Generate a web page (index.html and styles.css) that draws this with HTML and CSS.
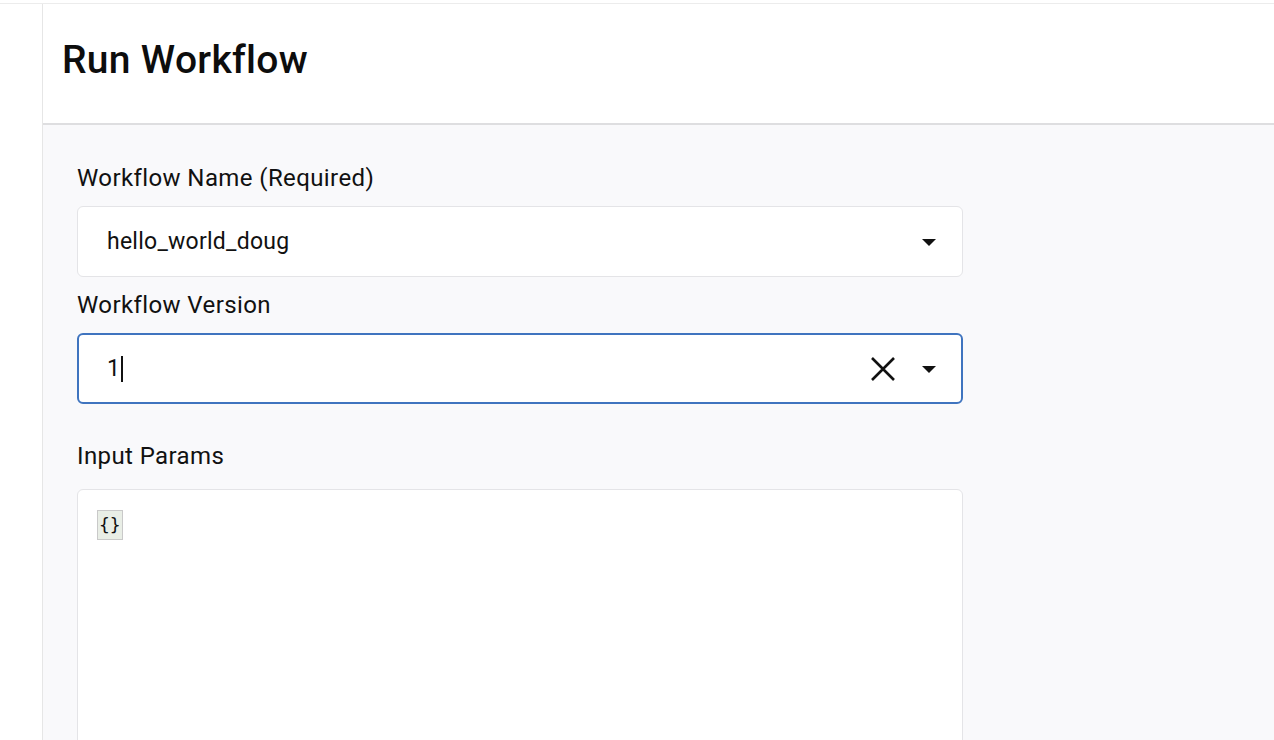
FILE: index.html
```html
<!DOCTYPE html>
<html>
<head>
<meta charset="utf-8">
<link rel="stylesheet" href="styles.css">
</head>
<body>
<div class="topline"></div>
<div class="app">
  <aside class="sidebar"></aside>
  <main class="main">
    <header class="header">
      <h1 class="title">Run Workflow</h1>
    </header>
    <section class="content">
      <div class="form">
        <label class="label">Workflow Name (Required)</label>
        <div class="select">
          <span class="value">hello_world_doug</span>
          <span class="icons">
            <svg class="caret" width="14" height="8" viewBox="0 0 14 8"><path d="M0 0 H14 L7 7 Z" fill="#111"/></svg>
          </span>
        </div>
        <label class="label">Workflow Version</label>
        <div class="select focused">
          <span class="value">1<span class="cursor"></span></span>
          <span class="icons">
            <svg class="clear" width="26" height="26" viewBox="0 0 26 26"><path d="M2 2 L24 24 M24 2 L2 24" stroke="#111" stroke-width="2.6" fill="none"/></svg>
            <svg class="caret" width="14" height="8" viewBox="0 0 14 8"><path d="M0 0 H14 L7 7 Z" fill="#111"/></svg>
          </span>
        </div>
        <label class="label label-params">Input Params</label>
        <div class="editor">
          <span class="code">{}</span>
        </div>
      </div>
    </section>
  </main>
</div>
</body>
</html>
```

FILE: styles.css
```css
* { box-sizing: border-box; }
html, body { margin: 0; padding: 0; height: 100%; overflow: hidden; }
body {
  font-family: Roboto, "Liberation Sans", Arial, sans-serif;
  color: #111;
  background: #fff;
}
.topline {
  height: 4px;
  border-bottom: 1px solid #ececec;
  background: #fff;
}
.app {
  display: flex;
  height: 736px;
}
.sidebar {
  width: 43px;
  flex: none;
  border-right: 1px solid #e6e6e6;
  background: #fff;
}
.main {
  flex: 1;
  display: flex;
  flex-direction: column;
  min-width: 0;
}
.header {
  height: 121px;
  flex: none;
  border-bottom: 2px solid #dedee0;
  background: #fff;
  padding: 34px 0 0 19px;
}
.title {
  margin: 0;
  font-size: 39px;
  font-weight: 500;
  line-height: 44px;
  color: #0d0d0d;
  letter-spacing: 0.3px;
}
.content {
  flex: 1;
  background: #f9f9fb;
  padding: 37px 0 0 34px;
  overflow: hidden;
}
.form {
  width: 886px;
  display: flex;
  flex-direction: column;
}
.label {
  display: block;
  font-size: 24px;
  line-height: 32px;
  letter-spacing: 0.4px;
  color: #111;
  margin-bottom: 12px;
}
.select {
  height: 71px;
  background: #fff;
  border: 1px solid #e4e4e7;
  border-radius: 6px;
  display: flex;
  align-items: center;
  justify-content: space-between;
  padding: 0 26px 0 29px;
  margin-bottom: 12px;
}
.select.focused {
  border: 2px solid #3f74bf;
  padding: 0 25px 0 28px;
  margin-bottom: 36px;
}
.value {
  font-size: 23px;
  line-height: 30px;
  letter-spacing: 0.25px;
  color: #111;
  display: flex;
  align-items: center;
}
.cursor {
  display: inline-block;
  width: 2px;
  height: 26px;
  background: #111;
  margin-left: 1px;
}
.icons {
  display: flex;
  align-items: center;
  gap: 26px;
}
.clear { display: block; }
.caret { display: block; margin-top: 2px; }
.label-params { margin-bottom: 17px; }
.editor {
  height: 300px;
  background: #fff;
  border: 1px solid #e4e4e7;
  border-radius: 6px;
  padding: 20px 19px;
}
.code {
  display: inline-block;
  font-family: "DejaVu Sans Mono", "Liberation Mono", monospace;
  font-size: 18px;
  line-height: 28px;
  background: #e9eee6;
  border: 1px solid #c9c9c9;
  padding: 0 1px;
  color: #111;
}
```
